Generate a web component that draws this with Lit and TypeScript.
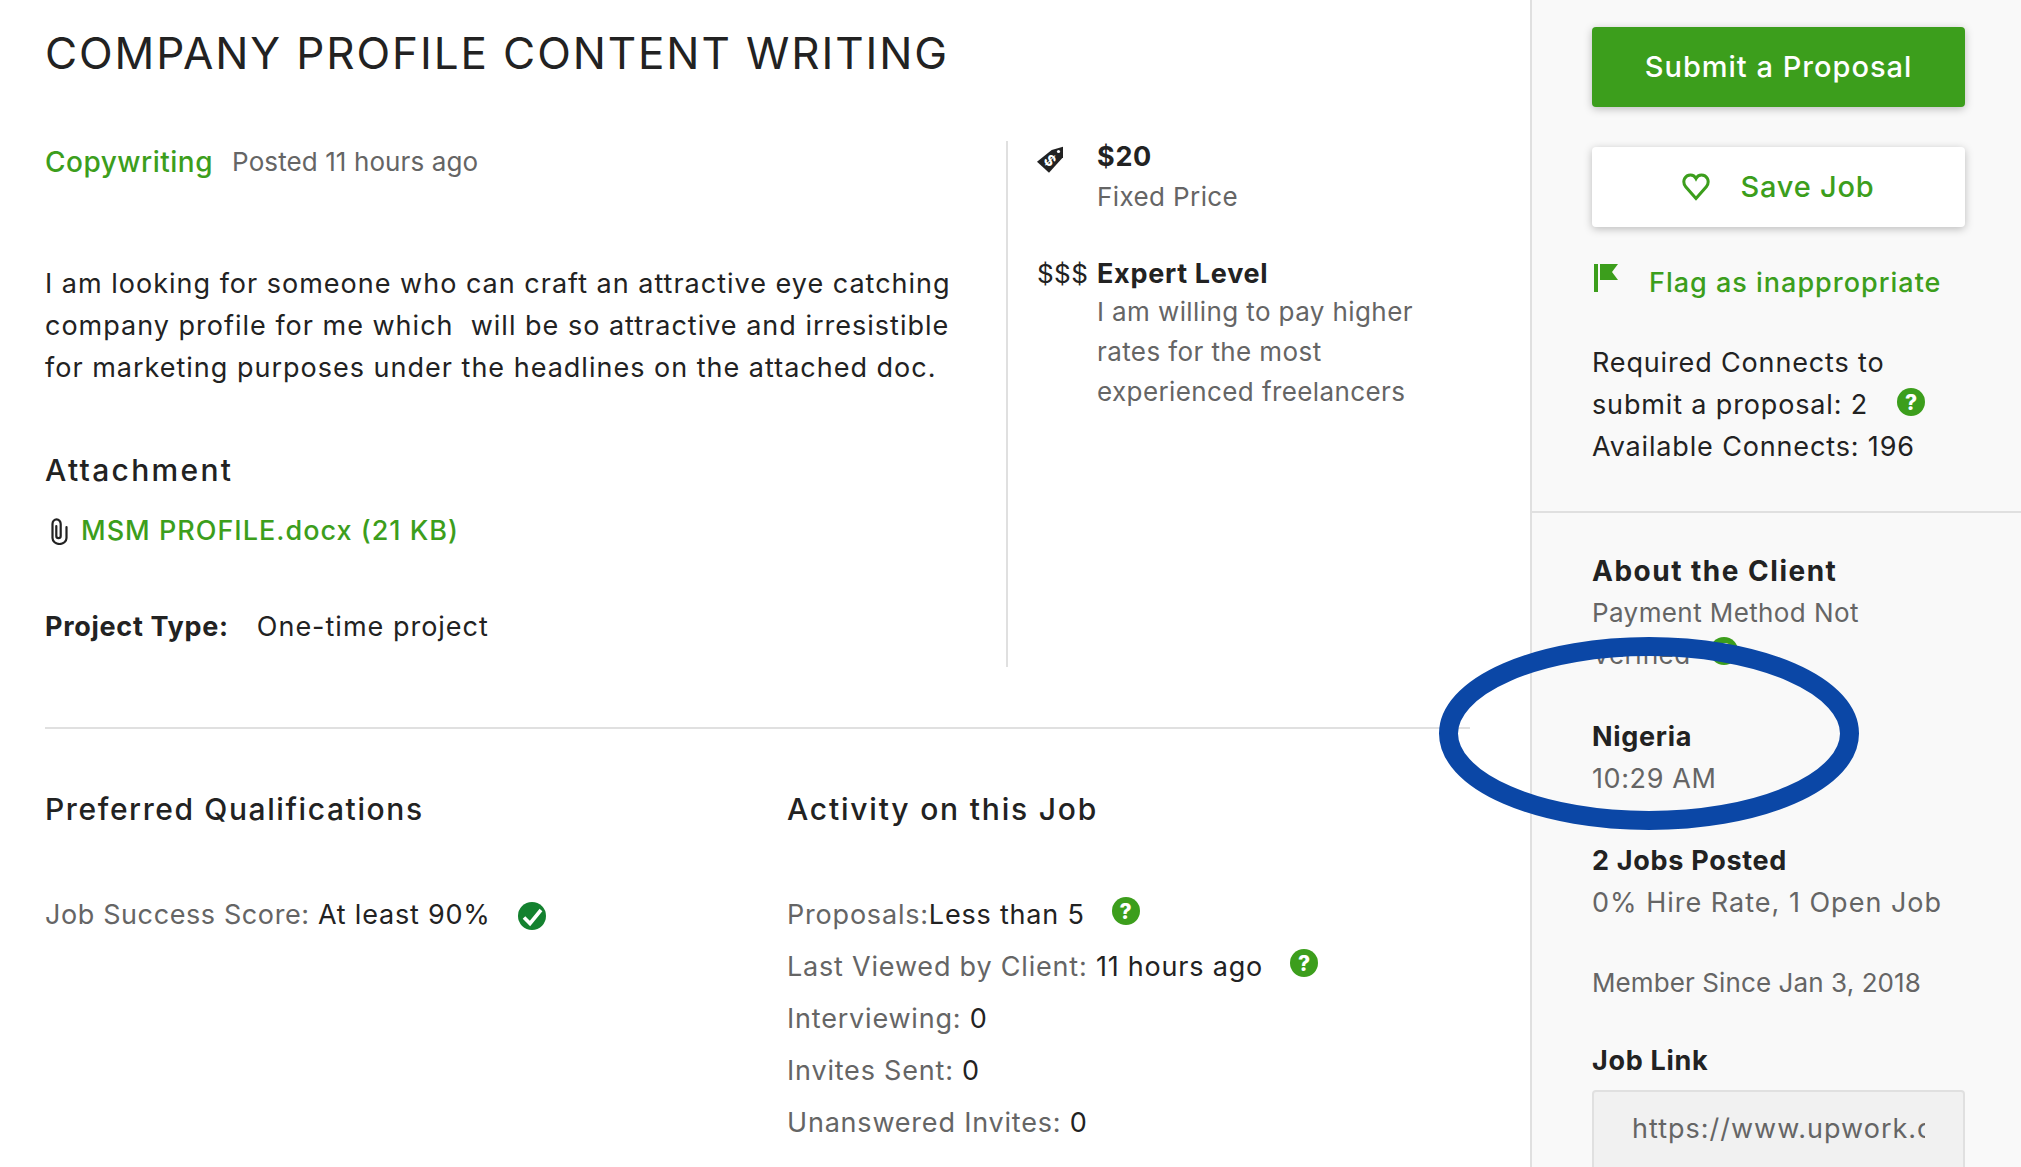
import { LitElement, html, css, svg } from "lit";
import { customElement } from "lit/decorators.js";

const help = html`<span class="help">?</span>`;

@customElement("app-root")
export class AppRoot extends LitElement {
  static styles = css`
    :host {
      display: block;
      width: 2021px;
      height: 1167px;
      overflow: hidden;
      position: relative;
      background: #fff;
      color: #222;
      font-family: Inter, "Liberation Sans", sans-serif;
      font-size: 27px;
      letter-spacing: 1px;
      line-height: 42px;
    }
    * { box-sizing: border-box; }
    .page { display: flex; height: 1167px; }
    .main { width: 1530px; padding-left: 45px; flex: none; }
    .side {
      flex: 1;
      border-left: 2px solid #e0e0e0;
      background: #f9f9f9;
    }
    h1 {
      margin: 28px 0 63px;
      font-size: 44px;
      letter-spacing: 1.9px;
      line-height: 50px;
      font-weight: 400;
      text-transform: uppercase;
    }
    h2 { margin: 0; font-size: 30px; letter-spacing: 1.6px; line-height: 42px; font-weight: 500; }
    h2.wider { letter-spacing: 1.8px; }
    .top { display: flex; height: 526px; }
    .lcol { width: 961px; flex: none; }
    .rcol { flex: 1; border-left: 2px solid #e0e0e0; padding-left: 29px; }
    .meta { display: flex; gap: 19px; }
    .green { color: #3c9e1c; }
    .muted { color: #656565; }
    .cat { font-weight: 500; font-size: 28px; letter-spacing: 0.5px; }
    .small { font-size: 26px; letter-spacing: 0.4px; }
    .tight { letter-spacing: 0.1px; }
    .mid { letter-spacing: 0.6px; }
    .desc { margin: 80px 0 0; }
    h2.att-h { margin-top: 60px; letter-spacing: 2.3px; }
    .att { display: flex; align-items: center; gap: 13px; margin-top: 19px; padding-left: 6px; font-weight: 500; }
    .ptype { display: flex; gap: 28px; margin-top: 54px; }
    b, .h { font-weight: 700; letter-spacing: 0.7px; }
    .wide { font-size: 28px; letter-spacing: 1.5px; }
    .terms { margin-top: -4px; line-height: 40px; }
    .term { display: flex; }
    .term + .term { margin-top: 37px; }
    .ticon { width: 60px; flex: none; font-size: 26px; letter-spacing: 0.4px; }
    .tag { display: block; margin-top: 9px; }
    .desc2 { margin-top: -2px; }
    .hr { width: 1425px; height: 2px; background: #e0e0e0; margin-top: 60px; }
    .bottom { display: flex; margin-top: 59px; }
    .bl { width: 742px; flex: none; }
    .rows { margin-top: 59px; line-height: 52px; letter-spacing: 0.8px; }
    .row { display: flex; align-items: center; height: 52px; white-space: pre; }
    .hwrap { display: flex; margin: -8px 0 0 27px; }
    .check { display: block; margin: 1px 0 0 27px; flex: none; }
    .help {
      display: inline-flex;
      align-items: center;
      justify-content: center;
      width: 28px;
      height: 28px;
      border-radius: 50%;
      background: #3c9e1c;
      color: #fff;
      font-size: 21px;
      letter-spacing: 0;
      line-height: 1;
      font-weight: 800;
      flex: none;
    }
    .sidein { padding: 27px 0 0 60px; width: 433px; }
    .btn {
      display: flex;
      align-items: center;
      justify-content: center;
      height: 80px;
      border-radius: 4px;
      box-shadow: 0 2px 8px rgba(0, 0, 0, 0.25);
      font-weight: 500;
    }
    .primary { background: #3c9e1c; color: #fff; font-size: 29px; letter-spacing: 1px; }
    .secondary { background: #fff; color: #3c9e1c; margin-top: 40px; gap: 30px; font-size: 29px; letter-spacing: 0.8px; }
    .flag { display: flex; align-items: center; gap: 31px; margin-top: 35px; font-weight: 500; padding-left: 2px; color: #3c9e1c; }
    .flag svg { margin-top: -10px; }
    .conn { margin-top: 38px; letter-spacing: 0.85px; }
    .conn .line { display: flex; align-items: center; }
    .conn .help { margin: -6px 0 0 29px; }
    .sep { height: 2px; background: #e0e0e0; margin-top: 43px; }
    .s2 { padding: 37px 0 0 60px; width: 433px; }
    .gap39 { margin-top: 39px; }
    .gap40 { margin-top: 40px; }
    .gap35 { margin-top: 35px; }
    .drop { position: relative; top: 1px; }
    .verified { display: flex; align-items: center; gap: 20px; }
    .verified .help { margin-top: -8px; }
    .link {
      margin-top: 9px;
      height: 120px;
      border: 2px solid #e0e0e0;
      border-radius: 4px;
      background: #f1f1f1;
      padding: 16px 38px;
      color: #656565;
    }
    .clip { overflow: hidden; white-space: nowrap; }
    .ring { position: absolute; left: 1430px; top: 630px; pointer-events: none; }
  `;

  render() {
    return html`
      <div class="page">
        <div class="main">
          <h1>Company Profile Content Writing</h1>
          <div class="top">
            <div class="lcol">
              <div class="meta"><span class="green cat">Copywriting</span><span class="muted small tight">Posted 11 hours ago</span></div>
              <p class="desc">I am looking for someone who can craft an attractive eye catching<br />company profile for me which&nbsp; will be so attractive and irresistible<br />for marketing purposes under the headlines on the attached doc.</p>
              <h2 class="att-h">Attachment</h2>
              <div class="att">
                <svg width="17" height="27" viewBox="0 0 17 27" fill="none" stroke="#222" stroke-width="2.2" stroke-linecap="round"><path d="M15.500 9V20a7 6 0 0 1-14 0V6a4.100 4.600 0 0 1 8.200 0V18a2.200 2.200 0 0 1-4.400 0V8" /></svg>
                <span class="green">MSM PROFILE.docx (21 KB)</span>
              </div>
              <div class="ptype"><b>Project Type:</b><span>One-time project</span></div>
            </div>
            <div class="rcol">
              <div class="terms">
                <div class="term">
                  <div class="ticon">
                    <svg class="tag" width="26" height="27" viewBox="0 0 26 27"><path fill="#222" d="M0 15.700 14.700 4 26 .7V11.300L12 26.700z" /><circle cx="21.500" cy="5.500" r="1.600" fill="#fff" /><text x="13" y="20" text-anchor="middle" transform="rotate(45 13 14.700)" font-size="15" font-weight="700" fill="#fff" font-family="Inter">$</text></svg>
                  </div>
                  <div><b>$20</b><div class="muted small">Fixed Price</div></div>
                </div>
                <div class="term">
                  <div class="ticon">$$$</div>
                  <div><b>Expert Level</b><div class="muted small desc2">I am willing to pay higher<br />rates for the most<br />experienced freelancers</div></div>
                </div>
              </div>
            </div>
          </div>
          <div class="hr"></div>
          <div class="bottom">
            <div class="bl">
              <h2>Preferred Qualifications</h2>
              <div class="rows">
                <div class="row"><span class="muted mid">Job Success Score: </span><span>At least 90%</span>
                  <svg class="check" width="28" height="28" viewBox="0 0 28 28"><circle cx="14" cy="14" r="14" fill="#14812f" /><path d="M6 15.500l6 6L23 8" fill="none" stroke="#fff" stroke-width="3.600" /></svg>
                </div>
              </div>
            </div>
            <div>
              <h2 class="wider">Activity on this Job</h2>
              <div class="rows">
                <div class="row"><span class="muted">Proposals:</span><span>Less than 5</span><span class="hwrap">${help}</span></div>
                <div class="row"><span class="muted">Last Viewed by Client: </span><span>11 hours ago</span><span class="hwrap">${help}</span></div>
                <div class="row"><span class="muted">Interviewing: </span><span>0</span></div>
                <div class="row"><span class="muted">Invites Sent: </span><span>0</span></div>
                <div class="row"><span class="muted">Unanswered Invites: </span><span>0</span></div>
              </div>
            </div>
          </div>
        </div>
        <div class="side">
          <div class="sidein">
            <div class="btn primary">Submit a Proposal</div>
            <div class="btn secondary">
              <svg width="28" height="28" viewBox="0 0 28 28" fill="none" stroke="#3c9e1c" stroke-width="3"><path d="M14 25.500 3.500 13.500C-.5 7.500 3.500 2 8.500 2c2.500 0 4.500 1.500 5.500 3.500C15 3.500 17 2 19.500 2c5 0 9 5.500 5 11.500z" /></svg>
              <span>Save Job</span>
            </div>
            <div class="flag">
              <svg width="24" height="28" viewBox="0 0 24 28" fill="#3c9e1c"><path d="M0 0h4v28H0zM6 0h18l-6 8 6 8H6z" /></svg>
              <span>Flag as inappropriate</span>
            </div>
            <div class="conn">
              <div>Required Connects to</div>
              <div class="line">submit a proposal: 2 ${help}</div>
              <div>Available Connects: 196</div>
            </div>
          </div>
          <div class="sep"></div>
          <div class="s2">
            <div class="h wide">About the Client</div>
            <div class="muted small">Payment Method Not</div>
            <div class="muted small verified">Verified ${help}</div>
            <div class="h gap39 drop">Nigeria</div>
            <div class="muted mid drop">10:29 AM</div>
            <div class="h gap40 drop">2 Jobs Posted</div>
            <div class="muted drop">0% Hire Rate, 1 Open Job</div>
            <div class="muted small tight gap39">Member Since Jan 3, 2018</div>
            <div class="h gap35 drop">Job Link</div>
            <div class="link"><div class="clip">https://www.upwork.com/jobs/</div></div>
          </div>
        </div>
      </div>
      <svg class="ring" width="440" height="210" viewBox="0 0 440 210" fill="none">
        ${svg`<ellipse cx="219" cy="103.500" rx="200.500" ry="87" stroke="#0b47a6" stroke-width="19" />`}
      </svg>
    `;
  }
}
